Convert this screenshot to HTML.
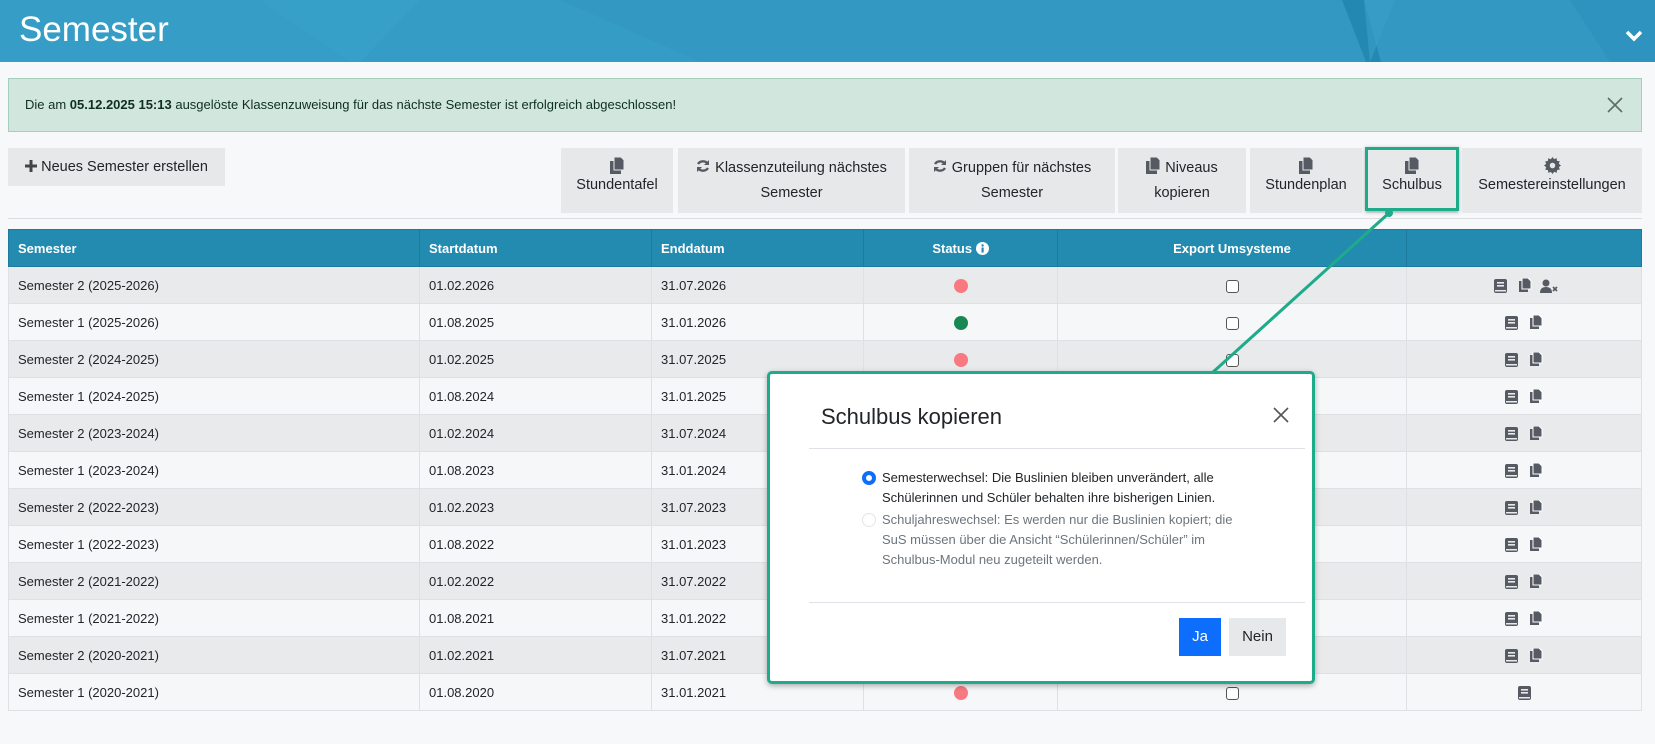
<!DOCTYPE html>
<html><head><meta charset="utf-8">
<style>
*{box-sizing:border-box;margin:0;padding:0}
body{width:1655px;height:744px;overflow:hidden;background:#f7f8fa;font-family:"Liberation Sans",sans-serif;color:#212529;position:relative}
.hdr{position:absolute;left:0;top:0;width:1655px;height:62px;background:#3399c3;overflow:hidden}
.hdr h1{position:absolute;left:19px;top:10px;font-weight:300;font-size:35px;color:#fff;letter-spacing:0}
.alert{position:absolute;left:8px;top:78px;width:1634px;height:54px;background:#d1e7dd;border:1px solid #a3cfbb;font-size:13px;line-height:52px;padding-left:16px;color:#0f2e20}
.btn{position:absolute;background:#e7e8ea;font-size:14.5px;text-align:center;color:#212529}
.ico{display:block;margin:9px auto 3px}
.tbl{position:absolute;left:8px;top:229px;width:1634px;border-collapse:collapse;font-size:13px}
.tbl th{background:#238bb0;color:#fff;height:37px;text-align:left;padding-left:9px;font-weight:bold;border:1px solid #1e7a9c}
.tbl td{height:37px;padding-left:9px;border:1px solid #dee0e3}
.tbl tr:nth-child(odd) td{background:#e9eaec}
.tbl tr:nth-child(even) td{background:#f6f7f9}
.tbl .c{text-align:center;padding-left:0}
.dot{display:inline-block;width:14px;height:14px;border-radius:50%;background:#f87a80;vertical-align:middle}
.g{background:#198754}
.cb{display:inline-block;width:13px;height:13px;border:1px solid #555;border-radius:3px;background:#fff;vertical-align:-4px}
.modal{position:absolute;left:767px;top:371px;width:548px;height:313px;background:#fff;border:3px solid #1eab8a;border-radius:5px;box-shadow:0 2px 6px rgba(0,0,0,.3)}
</style></head><body>
<div class="hdr">
<svg width="1655" height="62" style="position:absolute;left:0;top:0">
<polygon points="0,0 420,0 360,62 0,62" fill="#3aa3ca" opacity=".5"/>
<polygon points="260,0 560,0 700,62 350,62" fill="#3ca6cc" opacity=".3"/>
<polygon points="1342,0 1364,0 1381,62 1366,62" fill="#2489b2"/>
<polygon points="1364,0 1395,0 1370,62" fill="#3aa0c8" opacity=".6"/>
<polygon points="1570,0 1655,0 1655,62 1610,62" fill="#2e94bf"/>
</svg>
<h1>Semester</h1>
<svg width="18" height="12" style="position:absolute;left:1625px;top:30px"><path d="M2 2 L9 9 L16 2" stroke="#fff" stroke-width="3.5" fill="none"/></svg>
</div>
<div class="alert">Die am <b>05.12.2025 15:13</b> ausgelöste Klassenzuweisung für das nächste Semester ist erfolgreich abgeschlossen!
<svg width="16" height="16" style="position:absolute;right:18px;top:18px"><path d="M1 1L15 15M15 1L1 15" stroke="#5d6d66" stroke-width="1.6"/></svg></div>

<div class="btn" style="left:8px;top:148px;width:217px;height:38px;line-height:38px;font-size:14.5px">
<svg width="12" height="12" style="vertical-align:-1px"><path d="M6 0V12M0 6H12" stroke="#444" stroke-width="3"/></svg> Neues Semester erstellen</div>

<svg width="0" height="0" style="position:absolute"><defs>
<g id="cp"><rect x="0" y="4" width="11" height="13" fill="#555a63"/><path d="M4 0H11L14 3V13H4Z" fill="#555a63" stroke="#e7e8ea" stroke-width="1"/></g>
<g id="rf"><path d="M12 5A6 6 0 0 0 2 5M2 9A6 6 0 0 0 12 9" stroke="#555a63" stroke-width="2.4" fill="none"/><path d="M13 1V6H8Z M1 13V8H6Z" fill="#555a63"/></g>
</defs></svg>

<div class="btn" style="left:561px;top:148px;width:112px;height:65px"><svg class="ico" width="15" height="17"><use href="#cp"/></svg>Stundentafel</div>
<div class="btn" style="left:678px;top:148px;width:227px;height:65px;padding-top:8px;line-height:25px"><svg width="15" height="15" style="vertical-align:-2px"><use href="#rf"/></svg> Klassenzuteilung nächstes<br>Semester</div>
<div class="btn" style="left:909px;top:148px;width:206px;height:65px;padding-top:8px;line-height:25px"><svg width="15" height="15" style="vertical-align:-2px"><use href="#rf"/></svg> Gruppen für nächstes<br>Semester</div>
<div class="btn" style="left:1118px;top:148px;width:128px;height:65px;padding-top:8px;line-height:25px"><svg width="15" height="17" style="vertical-align:-2px"><use href="#cp"/></svg> Niveaus<br>kopieren</div>
<div class="btn" style="left:1250px;top:148px;width:112px;height:65px"><svg class="ico" width="15" height="17"><use href="#cp"/></svg>Stundenplan</div>
<div class="btn" style="left:1366px;top:148px;width:92px;height:65px"><svg class="ico" width="15" height="17"><use href="#cp"/></svg>Schulbus</div>
<div style="position:absolute;left:1365px;top:147px;width:94px;height:64px;border:3px solid #1eab8a;box-shadow:0 1px 4px rgba(0,0,0,.3)"></div>
<div class="btn" style="left:1462px;top:148px;width:180px;height:65px"><svg class="ico" width="17" height="17" viewBox="0 0 16 16"><path d="M8 0l1.5 2 2.4-.9.3 2.6 2.6.3-.9 2.4L16 8l-2 1.5.9 2.4-2.6.3-.3 2.6-2.4-.9L8 16l-1.5-2-2.4.9-.3-2.6-2.6-.3.9-2.4L0 8l2-1.5-.9-2.4 2.6-.3.3-2.6 2.4.9z" fill="#555a63"/><circle cx="8" cy="8" r="2.6" fill="#e7e8ea"/></svg>Semestereinstellungen</div>
<div style="position:absolute;left:8px;top:218px;width:1634px;height:1px;background:#dcdde0"></div>

<table class="tbl">
<tr><th style="width:411px">Semester</th><th style="width:232px">Startdatum</th><th style="width:212px">Enddatum</th><th class="c" style="width:194px">Status <svg width="13" height="13" style="vertical-align:-2px"><circle cx="6.5" cy="6.5" r="6.5" fill="#fff"/><rect x="5.5" y="5.5" width="2.2" height="5" fill="#238bb0"/><circle cx="6.6" cy="3.5" r="1.2" fill="#238bb0"/></svg></th><th class="c" style="width:349px">Export Umsysteme</th><th></th></tr>
<tbody id="tb"></tbody>
</table>
<script>
var rows=[["Semester 2 (2025-2026)","01.02.2026","31.07.2026",0],["Semester 1 (2025-2026)","01.08.2025","31.01.2026",1],["Semester 2 (2024-2025)","01.02.2025","31.07.2025",0],["Semester 1 (2024-2025)","01.08.2024","31.01.2025",0],["Semester 2 (2023-2024)","01.02.2024","31.07.2024",0],["Semester 1 (2023-2024)","01.08.2023","31.01.2024",0],["Semester 2 (2022-2023)","01.02.2023","31.07.2023",0],["Semester 1 (2022-2023)","01.08.2022","31.01.2023",0],["Semester 2 (2021-2022)","01.02.2022","31.07.2022",0],["Semester 1 (2021-2022)","01.08.2021","31.01.2022",0],["Semester 2 (2020-2021)","01.02.2021","31.07.2021",0],["Semester 1 (2020-2021)","01.08.2020","31.01.2021",0]];
var book='<svg width="13" height="14" style="vertical-align:middle;margin:0 6px"><rect x="0" y="0" width="13" height="14" rx="2" fill="#555a63"/><rect x="3" y="3" width="7" height="1.6" fill="#e9eaec"/><rect x="3" y="6" width="7" height="1.6" fill="#e9eaec"/><rect x="1" y="11" width="11" height="1.5" fill="#e9eaec"/></svg>';
var cp='<svg width="13" height="15" style="vertical-align:middle;margin:0 6px"><rect x="0" y="3" width="9" height="11" fill="#555a63"/><path d="M3 0H9L12 3V11H3Z" fill="#555a63" stroke="#fff" stroke-width="1"/></svg>';
var us='<svg width="18" height="14" style="vertical-align:middle;margin:0 2px"><circle cx="6" cy="4" r="3.5" fill="#555a63"/><path d="M0 14Q0 8 6 8Q12 8 12 14Z" fill="#555a63"/><path d="M13 8L17 12M17 8L13 12" stroke="#555a63" stroke-width="1.6"/></svg>';
var h='';rows.forEach(function(r,i){var a=i==0?book+cp+us:(i==11?book:book+cp);
h+='<tr><td>'+r[0]+'</td><td>'+r[1]+'</td><td>'+r[2]+'</td><td class="c"><span class="dot'+(r[3]?' g':'')+'"></span></td><td class="c"><span class="cb"></span></td><td class="c">'+a+'</td></tr>';});
document.getElementById('tb').innerHTML=h;
</script>

<svg width="1655" height="744" style="position:absolute;left:0;top:0;pointer-events:none">
<line x1="1389" y1="213" x2="1212" y2="373" stroke="#1eab8a" stroke-width="3"/>
<circle cx="1389" cy="213" r="4" fill="#1eab8a"/>
</svg>

<div class="modal">
<div style="position:absolute;left:51px;top:30px;font-size:22px;color:#212529">Schulbus kopieren</div>
<svg width="16" height="16" style="position:absolute;left:503px;top:33px"><path d="M1 1L15 15M15 1L1 15" stroke="#555" stroke-width="1.6"/></svg>
<div style="position:absolute;left:39px;top:74px;width:496px;height:1px;background:#dee2e6"></div>
<div style="position:absolute;left:112px;top:94px;font-size:13px;line-height:20px;width:400px">
<div style="position:relative"><span style="position:absolute;left:-20px;top:3px;width:14px;height:14px;border-radius:50%;border:4px solid #0d6efd;background:#fff"></span>Semesterwechsel: Die Buslinien bleiben unverändert, alle<br>Schülerinnen und Schüler behalten ihre bisherigen Linien.</div>
<div style="position:relative;color:#6c757d;margin-top:2px"><span style="position:absolute;left:-20px;top:3px;width:14px;height:14px;border-radius:50%;border:1px solid #e3e5e8;background:#fff"></span>Schuljahreswechsel: Es werden nur die Buslinien kopiert; die<br>SuS müssen über die Ansicht “Schülerinnen/Schüler” im<br>Schulbus-Modul neu zugeteilt werden.</div>
</div>
<div style="position:absolute;left:39px;top:228px;width:496px;height:1px;background:#dee2e6"></div>
<div style="position:absolute;left:409px;top:244px;width:42px;height:38px;background:#0d6efd;color:#fff;font-size:15px;text-align:center;line-height:38px">Ja</div>
<div style="position:absolute;left:459px;top:244px;width:57px;height:38px;background:#e7e8ea;font-size:15px;text-align:center;line-height:38px">Nein</div>
</div>
</body></html>
